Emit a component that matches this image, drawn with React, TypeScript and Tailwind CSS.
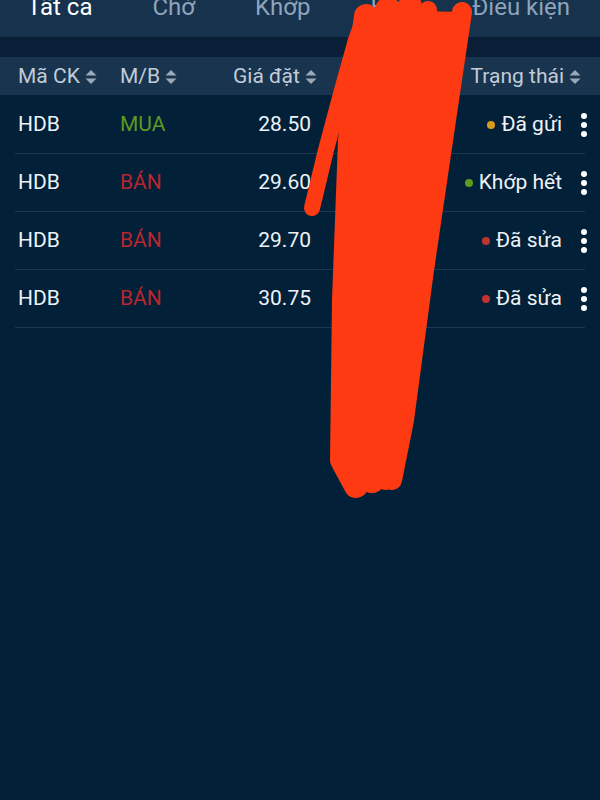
import React from 'react';

type Side = 'MUA' | 'BÁN';
type Status = 'sent' | 'matched' | 'edited';

interface Order {
  symbol: string;
  side: Side;
  price: string;
  qty: string;
  status: Status;
}

const orders: Order[] = [
  { symbol: 'HDB', side: 'MUA', price: '28.50', qty: '1,000', status: 'sent' },
  { symbol: 'HDB', side: 'BÁN', price: '29.60', qty: '1,000', status: 'matched' },
  { symbol: 'HDB', side: 'BÁN', price: '29.70', qty: '1,000', status: 'edited' },
  { symbol: 'HDB', side: 'BÁN', price: '30.75', qty: '1,000', status: 'edited' },
];

const statusLabels: Record<Status, string> = {
  sent: 'Đã gửi',
  matched: 'Khớp hết',
  edited: 'Đã sửa',
};

const statusDots: Record<Status, string> = {
  sent: 'bg-[#d89a1c]',
  matched: 'bg-[#5c9c1c]',
  edited: 'bg-[#c0332e]',
};

const tabs = ['Tất cả', 'Chờ', 'Khớp', 'Hủy', 'Điều kiện'];

// ---- Small pieces ----

const SortIcon: React.FC = () => (
  <svg width="14" height="18" viewBox="0 0 14 18" className="ml-[4px] shrink-0">
    <path d="M1.5 7.5 L7 2 L12.5 7.5 Z" fill="#9aa8b7" />
    <path d="M1.5 10.5 L7 16 L12.5 10.5 Z" fill="#9aa8b7" />
  </svg>
);

const Kebab: React.FC = () => (
  <div className="flex flex-col items-center gap-[3px] w-[8px] ml-[18px] mr-[-3px] shrink-0">
    <span className="w-[6px] h-[6px] rounded-full bg-white" />
    <span className="w-[6px] h-[6px] rounded-full bg-white" />
    <span className="w-[6px] h-[6px] rounded-full bg-white" />
  </div>
);

const HeaderCell: React.FC<{ label: string; className?: string }> = ({ label, className }) => (
  <div className={`flex items-center ${className ?? ''}`}>
    <span>{label}</span>
    <SortIcon />
  </div>
);

// ---- Red marker scribble drawn over the screenshot ----

const Scribble: React.FC = () => (
  <svg
    className="absolute left-0 top-0 pointer-events-none"
    width="600"
    height="800"
    viewBox="0 0 600 800"
  >
    <g fill="none" stroke="#fd3a12" strokeLinecap="round" strokeLinejoin="round">
      <polygon
        fill="#fd3a12"
        stroke="none"
        points="350,40 372,10 462,12 448,120 425,260 408,380 395,478 352,488 340,330 340,150"
      />
      <polyline strokeWidth="16" points="312,208 326,150 342,90 356,40 364,18" />
      <polyline strokeWidth="24" points="366,16 350,140 344,300 342,460 356,486" />
      <polyline strokeWidth="26" points="388,10 378,200 368,400 372,480" />
      <polyline strokeWidth="24" points="410,6 406,200 392,400 386,478" />
      <polyline strokeWidth="18" points="428,10 432,100 424,240" />
      <polyline strokeWidth="20" points="462,12 446,120 424,270 404,420 392,480" />
    </g>
  </svg>
);

// ---- Main ----

export default function App() {
  return (
    <div
      className="relative w-[600px] h-[800px] overflow-hidden bg-[#032039] text-[21px]"
      style={{ fontFamily: 'Roboto, "Noto Sans", sans-serif' }}
    >
      {/* Tabs (cut off at the top) */}
      <div className="h-[37px] bg-[#17324d] overflow-hidden">
        <div className="flex gap-[60px] pl-[27px] mt-[-7px] text-[24px] leading-[28px]">
          {tabs.map((t, i) => (
            <span key={t} className={i === 0 ? 'text-white' : 'text-[#8fa4ba]'}>
              {t}
            </span>
          ))}
        </div>
      </div>

      {/* Divider strip */}
      <div className="h-[20px] bg-[#0a1f37]" />

      {/* Column headers */}
      <div className="h-[38px] bg-[#18344f] text-[#c3ccd6] flex items-center pl-[18px] pr-[18px] pt-[1px]">
        <HeaderCell label="Mã CK" className="w-[102px]" />
        <HeaderCell label="M/B" className="w-[113px]" />
        <HeaderCell label="Giá đặt" className="w-[110px]" />
        <HeaderCell label="KL đặt" />
        <div className="ml-auto">
          <HeaderCell label="Trạng thái" />
        </div>
      </div>

      {/* Rows */}
      <div className="pt-[1px]">
        {orders.map((o, i) => (
          <div
            key={i}
            className="mx-[15px] h-[58px] flex items-center pl-[3px] border-b border-[#1b3650] text-[#eef2f6]"
          >
            <span className="w-[102px]">{o.symbol}</span>
            <span
              className={`w-[113px] ${o.side === 'MUA' ? 'text-[#5e9a1f]' : 'text-[#b8262e]'}`}
            >
              {o.side}
            </span>
            <span className="w-[78px] text-right">{o.price}</span>
            <span className="ml-[40px]">{o.qty}</span>
            <div className="ml-auto flex items-center">
              <span className={`w-[8px] h-[8px] rounded-full mr-[6px] ${statusDots[o.status]}`} />
              <span>{statusLabels[o.status]}</span>
            </div>
            <Kebab />
          </div>
        ))}
      </div>

      <Scribble />
    </div>
  );
}
